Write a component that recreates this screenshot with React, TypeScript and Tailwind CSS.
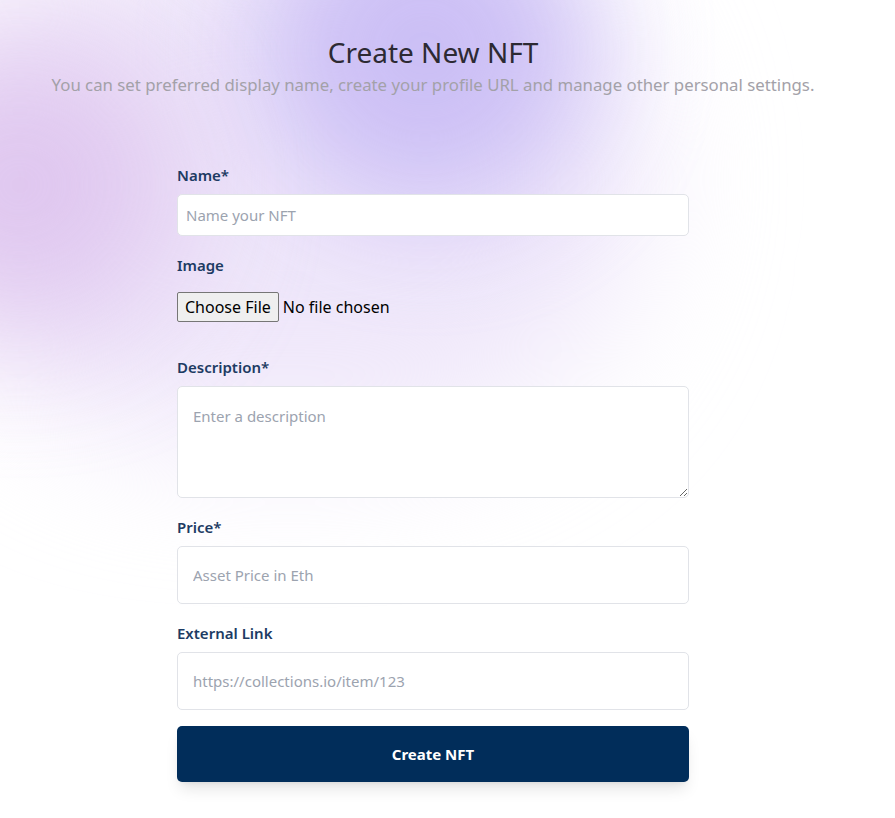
import React from 'react';

const labelCls = 'block text-[15px] leading-[22px] font-semibold text-[#1d3b63]';
const fieldCls =
	'w-full bg-white border border-[#e1e3e8] rounded-[5px] text-[15px] text-gray-800 placeholder:text-[#9ca3af] outline-none';

const Field = ({ label, children, className = '' }: { label: string; children: React.ReactNode; className?: string }) => (
	<div className={className}>
		<label className={labelCls}>{label}</label>
		<div className="mt-[8px]">{children}</div>
	</div>
);

export default function App() {
	return (
		<div className="relative min-h-screen w-full overflow-hidden bg-white font-['Noto_Sans',sans-serif]">
			{/* background glow */}
			<div className="pointer-events-none absolute -left-[60px] -top-[80px] w-[700px] h-[520px] rounded-full bg-[#efe7fa] blur-[70px]" />
			<div className="pointer-events-none absolute left-[260px] -top-[110px] w-[330px] h-[320px] rounded-full bg-[#c8bbf5] blur-[60px] opacity-90" />
			<div className="pointer-events-none absolute -left-[140px] top-[40px] w-[320px] h-[290px] rounded-full bg-[#dcc0ed] blur-[70px] opacity-85" />

			<div className="relative w-[866px] flex flex-col items-center pt-[35px] pb-[36px]">
				<h1 className="text-[28px] leading-[34px] font-normal text-[#2d2a33]">Create New NFT</h1>
				<p className="mt-[4px] text-[16.8px] leading-[24px] text-[#a3a1a8]">
					You can set preferred display name, create your profile URL and manage other personal settings.
				</p>

				<form className="mt-[67px] w-[512px]" onSubmit={(e) => e.preventDefault()}>
					<Field label="Name*">
						<input className={`${fieldCls} h-[42px] px-[8px]`} placeholder="Name your NFT" />
					</Field>

					<div className="mt-[18px]">
						<label className={labelCls}>Image</label>
						<div className="mt-[16px] flex items-center text-[16px] text-black">
							<span className="h-[30px] px-[7px] flex items-center bg-[#efefef] border border-[#767676] rounded-[2px]">
								Choose File
							</span>
							<span className="ml-[4px]">No file chosen</span>
						</div>
					</div>

					<Field label="Description*" className="mt-[34px]">
						<textarea
							className={`${fieldCls} block h-[112px] px-[15px] pt-[18px] pb-[12px] leading-[22px]`}
							placeholder="Enter a description"
						/>
					</Field>

					<Field label="Price*" className="mt-[18px]">
						<input className={`${fieldCls} h-[58px] px-[15px]`} placeholder="Asset Price in Eth" />
					</Field>

					<Field label="External Link" className="mt-[18px]">
						<input className={`${fieldCls} h-[58px] px-[15px]`} placeholder="https://collections.io/item/123" />
					</Field>

					<button
						type="submit"
						className="mt-[16px] w-full h-[56px] rounded-[5px] bg-[#012d5a] text-white text-[15px] font-bold shadow-lg"
					>
						Create NFT
					</button>
				</form>
			</div>
		</div>
	);
}
